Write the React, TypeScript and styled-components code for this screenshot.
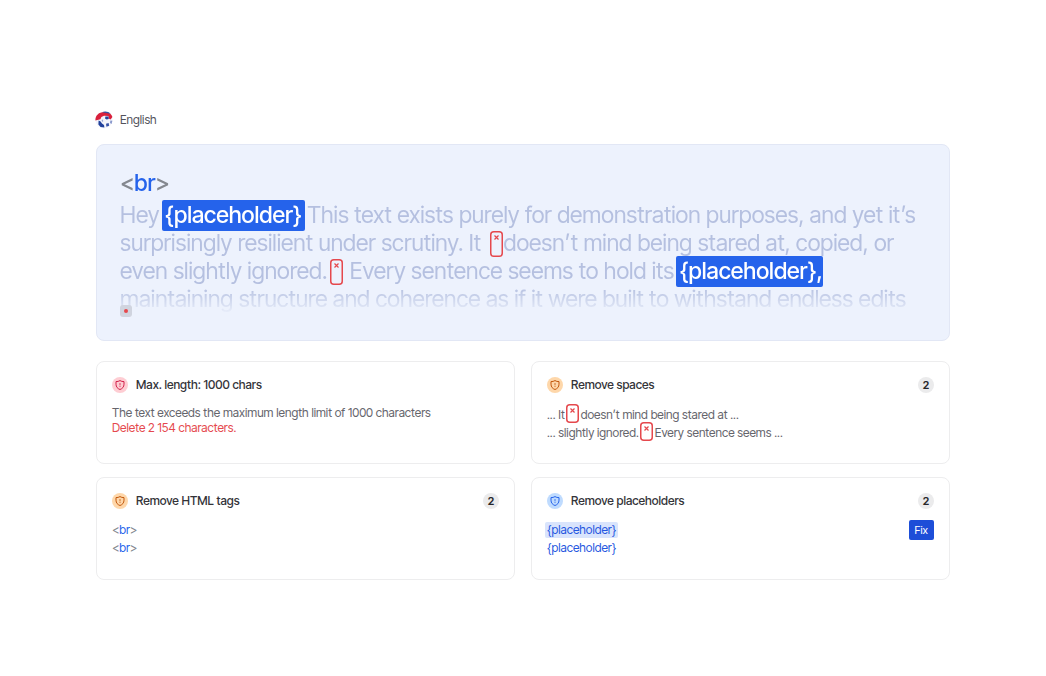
import React from "react";
import styled, { createGlobalStyle } from "styled-components";

const Global = createGlobalStyle`
  *, *::before, *::after { box-sizing: border-box; }
  body { margin: 0; background: #fff; font-family: "Inter Tight", "Inter Display", Inter, "Liberation Sans", sans-serif; color: #3f3f46; }
  h2, p, ul { margin: 0; padding: 0; font: inherit; }
  ul { list-style: none; }
`;

const Page = styled.main`
  display: flex;
  flex-direction: column;
  padding: 112px 96px 96px;
`;

const Language = styled.div`
  display: flex;
  align-items: center;
  gap: 8px;
  height: 16px;
  margin-bottom: 16px;
  font-size: 12px;
  line-height: 16px;
  color: #52525b;
`;

const Editor = styled.section`
  position: relative;
  padding: 24px 23px;
  border: 1px solid #e2e7f5;
  border-radius: 8px;
  background: #edf2fd;
  margin-bottom: 20px;
`;

const Copy = styled.div`
  height: 147px;
  overflow: hidden;
  color: #b5c0e0;
  font-size: 23px;
  line-height: 28px;
  white-space: nowrap;
  mask-image: linear-gradient(#000 118px, transparent 146px);
`;

const TagLine = styled.p`
  margin-bottom: 4px;
`;

const Bracket = styled.span`
  color: #84888f;
`;

const TagName = styled.span`
  color: #2563eb;
`;

const Headline = styled.span`
  font-weight: 500;
`;

const Chip = styled.span<{ $open?: boolean }>`
  padding: 1px ${(p) => (p.$open ? 0 : 3)}px 2px 3px;
  margin: 0 ${(p) => (p.$open ? 0 : -3)}px 0 -3px;
  border-radius: 2px;
  background: #2563eb;
  color: #fff;
  font-weight: 500;
`;

const Mark = styled.svg<{ $large?: boolean }>`
  margin: 0 ${(p) => (p.$large ? "1px 0 3px" : "2px 0 1px")};
  vertical-align: ${(p) => (p.$large ? -6 : -4)}px;
`;

const Recorder = styled.span`
  position: absolute;
  left: 23px;
  bottom: 23px;
  display: grid;
  place-items: center;
  width: 12px;
  height: 12px;
  border-radius: 3px;
  background: #d0d4df;
  &::after { content: ""; width: 4px; height: 4px; border-radius: 2px; background: #e5484d; }
`;

const Grid = styled.div`
  display: grid;
  grid-template-columns: 1fr 1fr;
  gap: 13px 16px;
`;

const Card = styled.section`
  min-height: 103px;
  padding: 15px;
  border: 1px solid #ededee;
  border-radius: 8px;
`;

const Head = styled.header`
  display: flex;
  align-items: center;
  gap: 8px;
  height: 16px;
  margin-bottom: 12px;
`;

const Title = styled.h2`
  && { font-size: 12px; font-weight: 500; line-height: 16px; }
  color: #333338;
`;

const Count = styled.span`
  display: grid;
  place-items: center;
  width: 16px;
  height: 16px;
  margin-left: auto;
  border-radius: 8px;
  background: #ebebec;
  color: #27272a;
  font-size: 11px;
  font-weight: 600;
`;

const Text = styled.p<{ $danger?: boolean }>`
  && { font-size: 12px; line-height: 15px; }
  color: ${(p) => (p.$danger ? "#e5484d" : "#64646b")};
`;

const List = styled.ul`
  && { font-size: 12px; line-height: 18px; }
  color: #64646b;
`;

const Item = styled.li`
  display: flex;
  align-items: center;
  justify-content: space-between;
  height: 18px;
  white-space: pre;
`;

const Token = styled.span<{ $active?: boolean }>`
  padding: 0 2px;
  margin-left: -2px;
  border-radius: 2px;
  line-height: 16px;
  color: #2456e0;
  background: ${(p) => (p.$active ? "#d9e4fc" : "transparent")};
`;

const Fix = styled.button`
  height: 20px;
  padding: 0 6px;
  border: 0;
  border-radius: 2px;
  background: #1d4ed8;
  color: #fff;
  font-family: inherit;
  font-size: 11px;
  line-height: 20px;
`;

const tones = {
  red: ["#fecdd3", "#d11f4a"],
  orange: ["#fed7aa", "#c2570c"],
  blue: ["#bfdbfe", "#2563eb"],
};

function Shield({ tone }: { tone: keyof typeof tones }) {
  const [bg, fg] = tones[tone];
  return (
    <svg width="16" height="16" viewBox="0 0 16 16" fill="none" aria-hidden="true">
      <circle cx="8" cy="8" r="8" fill={bg} />
      <path d="M8 3.6C9.2 4.4 10.5 4.6 12 4.6V7.2C12 9.9 10.4 11.7 8 12.5 5.6 11.7 4 9.9 4 7.2V4.6C5.5 4.6 6.8 4.4 8 3.6Z" stroke={fg} strokeLinejoin="round" />
      <path d="M8 6V8.4M8 9.1V10" stroke={fg} strokeOpacity=".8" />
    </svg>
  );
}

function Flag() {
  return (
    <svg width="16" height="16" viewBox="0 0 16 16" overflow="visible" aria-hidden="true">
      <circle cx="8" cy="8" r="8.5" fill="#f3f4fb" />
      <path d="M-.6 8.5C-.8 3.5 3 0 8 0 12 0 15.4 1.4 16.4 5L14.6 7.6 12.6 6.6 12.4 4 8 3.8 5.4 5 4.4 7.2Z" fill="#d9203c" />
      <path d="M6 .3C8.5-1 12.6-.6 14.6 1.8L11.5 1.2Z" fill="#3152a4" />
      <path d="M2.6 8.6 4.6 9.6 6 11.6 8 13 8.4 15.6 4.6 15 2.4 12.4Z" fill="#21419b" />
      <path d="M10 11.8 12.6 11 13.2 13.8 10.4 14.8Z" fill="#3854a8" />
      <path d="M14.4 8.6 16.4 8.8 15.6 12 14 11Z" fill="#8797cb" />
      <path d="M9.4 4.6 12.4 4.6 12.8 7 10.6 7.4 9 6.4Z" fill="#23439c" />
      <path d="M5.6 8 7 7.6 7.2 9.6 6 9.8Z" fill="#98a6d4" />
    </svg>
  );
}

function Space({ large }: { large?: boolean }) {
  const height = large ? 26 : 19;
  return (
    <Mark $large={large} width="13" height={height} viewBox={`0 0 13 ${height}`} fill="none" stroke="#e5484d" aria-hidden="true">
      <rect x=".75" y=".75" width="11.5" height={height - 1.5} rx="3" strokeWidth="1.5" fill={large ? "none" : "#fff"} />
      <path d="M4.5 4.5 8.5 8.5M8.5 4.5 4.5 8.5" strokeWidth="1.2" />
    </Mark>
  );
}

function Br() {
  return (
    <span>
      <Bracket>&lt;</Bracket>
      <TagName>br</TagName>
      <Bracket>&gt;</Bracket>
    </span>
  );
}

export default function App() {
  return (
    <>
      <Global />
      <Page>
        <Language><Flag />English</Language>
        <Editor>
          <Copy>
            <TagLine><Headline><Br /></Headline></TagLine>
            <p>Hey <Chip>{"{placeholder}"}</Chip> This text exists purely for demonstration purposes, and yet it’s</p>
            <p>surprisingly resilient under scrutiny. It <Space large />doesn’t mind being stared at, copied, or</p>
            <p>even slightly ignored.<Space large /> Every sentence seems to hold its <Chip $open>{"{placeholder},"}</Chip></p>
            <p>maintaining structure and coherence as if it were built to withstand endless edits</p>
          </Copy>
          <Recorder />
        </Editor>
        <Grid>
          <Card>
            <Head><Shield tone="red" /><Title>Max. length: 1000 chars</Title></Head>
            <Text>The text exceeds the maximum length limit of 1000 characters</Text>
            <Text $danger>Delete 2 154 characters.</Text>
          </Card>
          <Card>
            <Head><Shield tone="orange" /><Title>Remove spaces</Title><Count>2</Count></Head>
            <List>
              <Item><span>... It<Space />doesn’t mind being stared at ...</span></Item>
              <Item><span>... slightly ignored.<Space />Every sentence seems ...</span></Item>
            </List>
          </Card>
          <Card>
            <Head><Shield tone="orange" /><Title>Remove HTML tags</Title><Count>2</Count></Head>
            <List><Item><Br /></Item><Item><Br /></Item></List>
          </Card>
          <Card>
            <Head><Shield tone="blue" /><Title>Remove placeholders</Title><Count>2</Count></Head>
            <List>
              <Item><Token $active>{"{placeholder}"}</Token><Fix type="button">Fix</Fix></Item>
              <Item><Token>{"{placeholder}"}</Token></Item>
            </List>
          </Card>
        </Grid>
      </Page>
    </>
  );
}
